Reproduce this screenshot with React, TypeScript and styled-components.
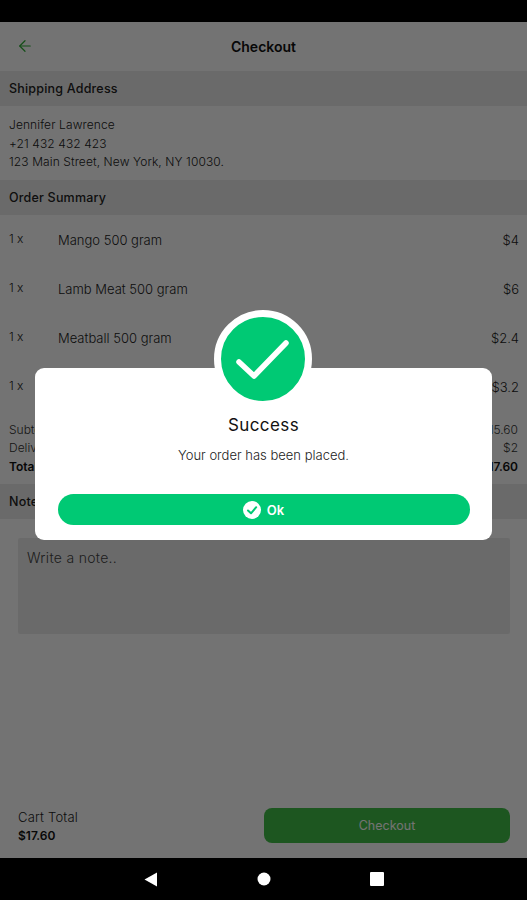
import styled, { createGlobalStyle } from 'styled-components';
import { ArrowLeft } from 'lucide-react';

const GlobalStyle = createGlobalStyle`
  html, body {
    margin: 0;
    background: #000;
  }
  * {
    box-sizing: border-box;
  }
`;

const Screen = styled.div`
  width: 527px;
  height: 900px;
  display: flex;
  flex-direction: column;
  font-family: Inter, 'Open Sans', sans-serif;
  color: #111;
  overflow: hidden;
`;

const SystemBar = styled.div<{ $height: number }>`
  height: ${({ $height }) => $height}px;
  flex: none;
  background: #000;
  display: flex;
  align-items: center;
  justify-content: center;
  gap: 99px;
`;

const Stage = styled.div`
  flex: 1;
  position: relative;
  min-height: 0;
`;

const Page = styled.main`
  height: 100%;
  display: flex;
  flex-direction: column;
  background: #fff;
`;

const AppBar = styled.header`
  height: 49px;
  flex: none;
  position: relative;
  display: flex;
  align-items: center;
  justify-content: center;
  color: #2fae36;
`;

const BackButton = styled.span`
  position: absolute;
  left: 16px;
  top: 15px;
  display: flex;
`;

const Title = styled.h1`
  margin: 0;
  font-size: 14px;
  font-weight: 600;
  color: #111;
`;

const SectionHead = styled.h2`
  height: 35px;
  flex: none;
  margin: 0;
  padding: 0 9px;
  display: flex;
  align-items: center;
  background: #ececec;
  font-size: 12.5px;
  font-weight: 500;
  letter-spacing: 0.2px;
  color: #222;
`;

const Address = styled.div`
  height: 74px;
  flex: none;
  padding: 10px 9px 0;
  font-size: 12px;
  line-height: 18.5px;
  font-weight: 300;
  letter-spacing: 0.1px;
  color: #222;
`;

const ItemRow = styled.div`
  height: 49px;
  flex: none;
  padding: 1px 8px 0 9px;
  display: flex;
  align-items: center;
  font-size: 13px;
  font-weight: 300;
  color: #222;
`;

const Qty = styled.span`
  width: 49px;
  flex: none;
  margin-top: -3px;
  font-size: 12px;
`;

const ItemName = styled.span`
  flex: 1;
`;

const Totals = styled.div`
  height: 73px;
  flex: none;
  padding: 9px 9px 0;
  display: flex;
  flex-direction: column;
  font-size: 12px;
`;

const TotalRow = styled.div<{ $strong?: boolean }>`
  height: 18.5px;
  display: flex;
  align-items: center;
  justify-content: space-between;
  color: ${({ $strong }) => ($strong ? '#111' : '#333')};
  font-weight: ${({ $strong }) => ($strong ? 600 : 300)};
`;

const NoteBox = styled.div`
  height: 96px;
  flex: none;
  margin: 19px 17px 0 18px;
  padding: 11px 9px;
  background: #ececec;
  border-radius: 2px;
  font-size: 14px;
  font-weight: 300;
  letter-spacing: 0.3px;
  color: #444;
`;

const Footer = styled.footer`
  margin-top: auto;
  height: 65px;
  flex: none;
  padding: 0 17px 15px 18px;
  display: flex;
  align-items: flex-end;
  justify-content: space-between;
`;

const CartTotal = styled.div`
  display: flex;
  flex-direction: column;
  gap: 1px;
  margin-bottom: -2px;
  font-size: 13px;
  font-weight: 300;
  line-height: 18px;
  letter-spacing: 0.2px;
  color: #222;
`;

const CartAmount = styled.strong`
  font-size: 12px;
  font-weight: 600;
  letter-spacing: 0;
  color: #111;
`;

const CheckoutButton = styled.button`
  width: 246px;
  height: 35px;
  border: 0;
  border-radius: 8px;
  background: #42bf48;
  color: #fff;
  font: 400 12.5px Inter, sans-serif;
`;

const Scrim = styled.div`
  position: absolute;
  inset: 0;
  background: rgba(0, 0, 0, 0.55);
  display: flex;
  justify-content: center;
  padding-top: 346px;
`;

const Dialog = styled.section`
  position: relative;
  width: 457px;
  height: 172px;
  padding: 45px 22px 0;
  display: flex;
  flex-direction: column;
  align-items: center;
  background: #fff;
  border-radius: 9px;
`;

const Badge = styled.div`
  position: absolute;
  left: 179px;
  top: -58px;
  width: 98px;
  height: 98px;
  border-radius: 50%;
  background: #00c974;
  border: 7px solid #fff;
  display: flex;
  align-items: center;
  justify-content: center;
`;

const DialogTitle = styled.h3`
  margin: 0;
  font-size: 17px;
  line-height: 24px;
  font-weight: 400;
  color: #111;
  letter-spacing: 0.4px;
`;

const DialogText = styled.p`
  margin: 9px 0 0;
  font-size: 13px;
  font-weight: 300;
  line-height: 18px;
  color: #222;
`;

const OkButton = styled.button`
  width: 412px;
  height: 31px;
  margin-top: 30px;
  flex: none;
  border: 0;
  border-radius: 16px;
  background: #00c974;
  color: #fff;
  font: 600 13px Inter, sans-serif;
  display: flex;
  align-items: center;
  justify-content: center;
  gap: 6px;
`;

const items = [
  { name: 'Mango 500 gram', price: '$4' },
  { name: 'Lamb Meat 500 gram', price: '$6' },
  { name: 'Meatball 500 gram', price: '$2.4' },
  { name: 'Chicken 500 gram', price: '$3.2' },
];

export default function App() {
  return (
    <Screen>
      <GlobalStyle />
      <SystemBar $height={22} />
      <Stage>
        <Page>
          <AppBar>
            <BackButton>
              <ArrowLeft size={18} strokeWidth={1.6} />
            </BackButton>
            <Title>Checkout</Title>
          </AppBar>
          <SectionHead>Shipping Address</SectionHead>
          <Address>
            Jennifer Lawrence
            <br />
            +21 432 432 423
            <br />
            123 Main Street, New York, NY 10030.
          </Address>
          <SectionHead>Order Summary</SectionHead>
          {items.map((item) => (
            <ItemRow key={item.name}>
              <Qty>1 x</Qty>
              <ItemName>{item.name}</ItemName>
              <span>{item.price}</span>
            </ItemRow>
          ))}
          <Totals>
            <TotalRow>
              <span>Subtotal</span>
              <span>$15.60</span>
            </TotalRow>
            <TotalRow>
              <span>Delivery</span>
              <span>$2</span>
            </TotalRow>
            <TotalRow $strong>
              <span>Total</span>
              <span>$17.60</span>
            </TotalRow>
          </Totals>
          <SectionHead>Notes</SectionHead>
          <NoteBox>Write a note..</NoteBox>
          <Footer>
            <CartTotal>
              Cart Total
              <CartAmount>$17.60</CartAmount>
            </CartTotal>
            <CheckoutButton>Checkout</CheckoutButton>
          </Footer>
        </Page>
        <Scrim>
          <Dialog>
            <Badge>
              <svg width="54" height="44" viewBox="0 0 54 44" fill="none">
                <path d="M3 25 L18 39 L50 6" stroke="#fff" strokeWidth="5.5" strokeLinecap="round" strokeLinejoin="round" />
              </svg>
            </Badge>
            <DialogTitle>Success</DialogTitle>
            <DialogText>Your order has been placed.</DialogText>
            <OkButton>
              <svg width="18" height="18" viewBox="0 0 18 18">
                <circle cx="9" cy="9" r="9" fill="#fff" />
                <path d="M5 9.5 L8 12.3 L13.2 6.2" stroke="#00c974" strokeWidth="2" fill="none" strokeLinecap="round" strokeLinejoin="round" />
              </svg>
              Ok
            </OkButton>
          </Dialog>
        </Scrim>
      </Stage>
      <SystemBar $height={42}>
        <svg width="14" height="15" viewBox="0 0 14 15">
          <path d="M13 0.5 V14.5 L0.5 7.5 Z" fill="#fff" />
        </svg>
        <svg width="14" height="14" viewBox="0 0 14 14">
          <circle cx="7" cy="7" r="6.5" fill="#fff" />
        </svg>
        <svg width="14" height="14" viewBox="0 0 14 14">
          <rect width="14" height="14" rx="1" fill="#fff" />
        </svg>
      </SystemBar>
    </Screen>
  );
}
